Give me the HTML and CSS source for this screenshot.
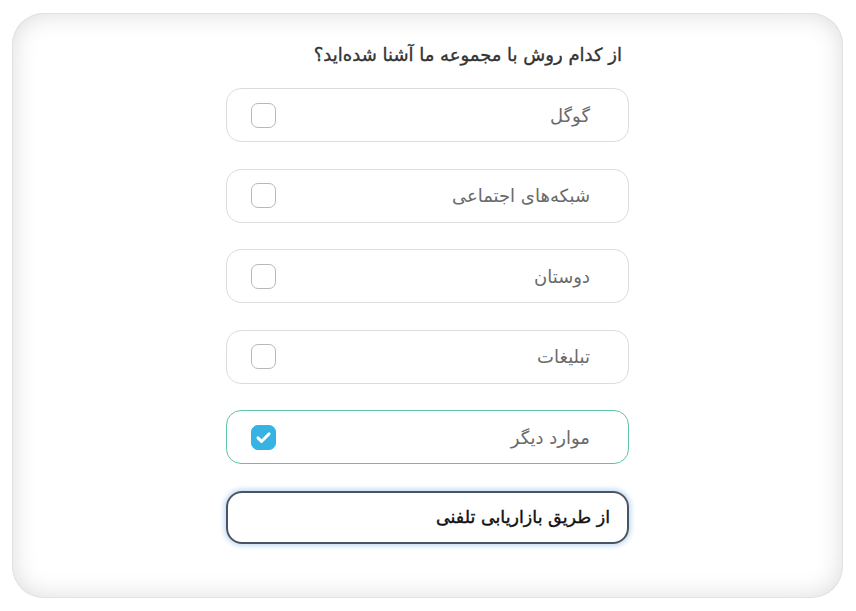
FILE: index.html
```html
<!DOCTYPE html>
<html lang="fa" dir="rtl">
<head>
<meta charset="utf-8">
<title>از کدام روش با مجموعه ما آشنا شده‌اید؟</title>
<link rel="stylesheet" href="styles.css">
</head>
<body>
<div class="page">
  <div class="card">
    <div class="form">
      <div class="question">از کدام روش با مجموعه ما آشنا شده‌اید؟</div>
      <div class="options">
        <label class="option"><span class="label">گوگل</span><span class="check"></span></label>
        <label class="option"><span class="label">شبکه‌های اجتماعی</span><span class="check"></span></label>
        <label class="option"><span class="label">دوستان</span><span class="check"></span></label>
        <label class="option"><span class="label">تبلیغات</span><span class="check"></span></label>
        <label class="option selected"><span class="label">موارد دیگر</span><span class="check checked"><svg viewBox="0 0 24 24" width="19" height="19"><path d="M5 12.5l4.5 4.5L19 7.5" fill="none" stroke="#fff" stroke-width="3.8" stroke-linecap="round" stroke-linejoin="round"/></svg></span></label>
        <div class="input">از طریق بازاریابی تلفنی</div>
      </div>
    </div>
  </div>
</div>
</body>
</html>
```
FILE: styles.css
```css
* { box-sizing: border-box; }
html, body { margin: 0; padding: 0; background: #fff; }
body { font-family: "DejaVu Sans", "Noto Sans", sans-serif; }
.page {
  width: 856px;
  height: 611px;
  padding: 13px 13px 13px 12px;
}
.card {
  height: 585px;
  border-radius: 32px;
  background: #fff;
  box-shadow: inset 0 0 0 1px #e2e2e2, inset 0 0 26px rgba(0,0,0,0.15);
  display: flex;
  justify-content: center;
  padding-top: 28px;
}
.form {
  width: 403px;
  display: flex;
  flex-direction: column;
}
.question {
  height: 28px;
  line-height: 28px;
  font-size: 18px;
  font-weight: normal;
  -webkit-text-stroke: 0.35px #333;
  color: #333;
  padding-right: 7px;
  margin-bottom: 19px;
}
.options {
  display: flex;
  flex-direction: column;
  gap: 26.5px;
}
.option {
  height: 54px;
  border: 1.5px solid #dcdcdc;
  border-radius: 15px;
  display: flex;
  align-items: center;
  justify-content: space-between;
  padding: 0 38px 0 24px;
  background: #fff;
}
.option.selected {
  border-color: #5cc4a8;
}
.label {
  font-size: 18px;
  color: #6a6a6a;
}
.check {
  width: 25px;
  height: 25px;
  border: 1.5px solid #b8b8b8;
  border-radius: 7px;
  display: flex;
  align-items: center;
  justify-content: center;
}
.check.checked {
  background: #36b2e3;
  border-color: #36b2e3;
}
.input {
  height: 53px;
  border: 2px solid #4a5563;
  border-radius: 16px;
  box-shadow: 0 0 5px 2px #c4dcf4;
  display: flex;
  align-items: center;
  padding: 0 17px;
  font-size: 17.5px;
  font-weight: normal;
  -webkit-text-stroke: 0.4px #111;
  color: #111;
}
```
